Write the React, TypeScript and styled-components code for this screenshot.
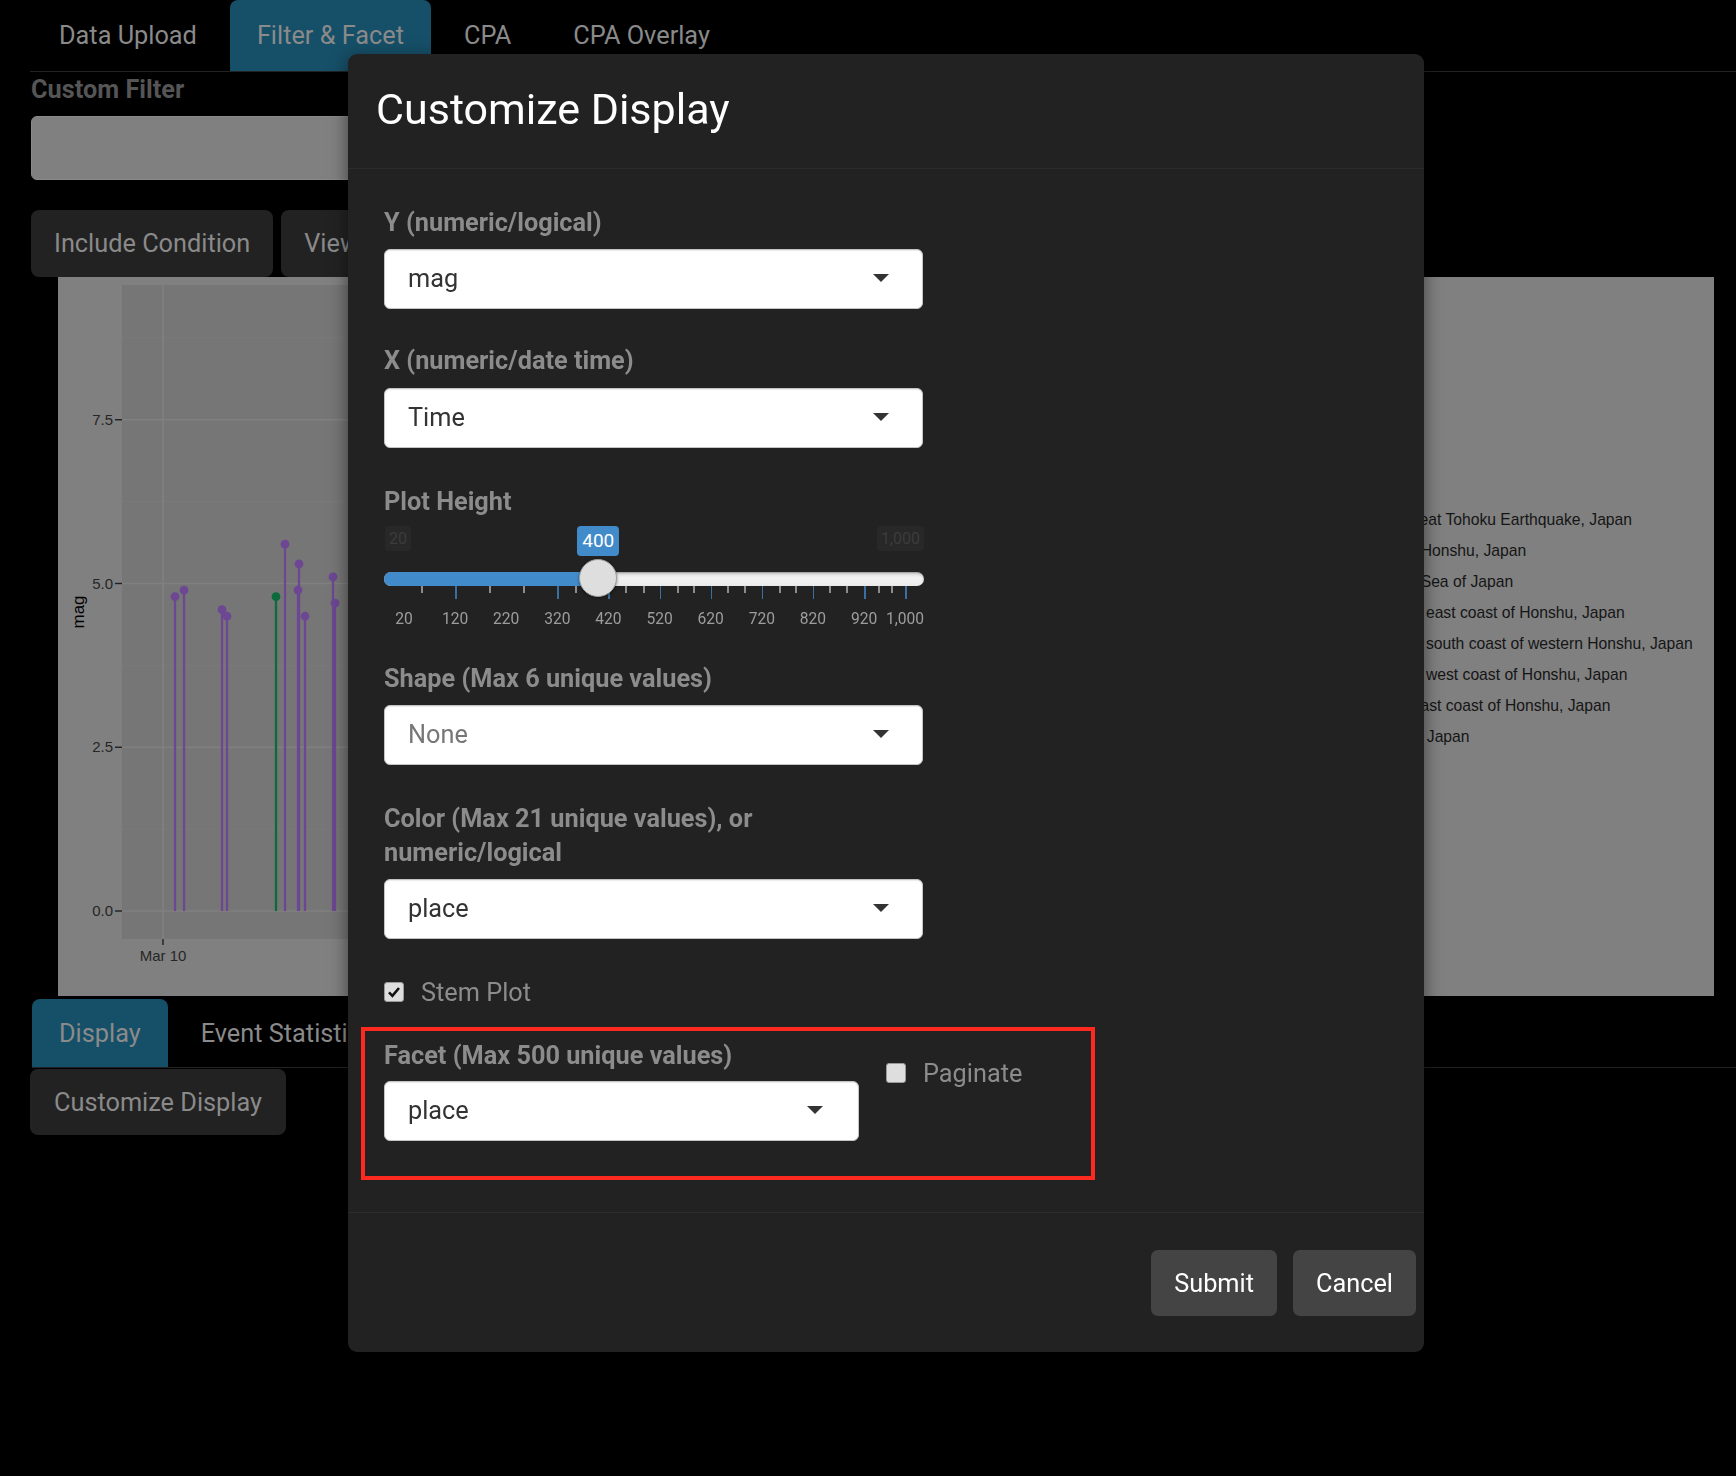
import React from 'react';
import styled, { createGlobalStyle } from 'styled-components';

const GlobalStyle = createGlobalStyle`
  * { box-sizing: border-box; }
  html, body {
    margin: 0;
    padding: 0;
    background: #000;
  }
  body {
    width: 1736px;
    height: 1476px;
    overflow: hidden;
    font-family: Roboto, "Noto Sans", Arial, sans-serif;
  }
`;

const BASE = 25.3;

/* ---------- page behind the dialog (already dimmed by the backdrop) ---------- */

const Page = styled.div`
  width: 1736px;
  height: 1476px;
  background: #000;
  color: #8a8a8a;
  font-size: ${BASE}px;
`;

const TabBar = styled.nav<{ $left: number; $height: number }>`
  display: flex;
  gap: 4px;
  margin-left: ${(p) => p.$left}px;
  height: ${(p) => p.$height + 1}px;
  border-bottom: 1px solid #222;
`;

const Tab = styled.div<{ $active?: boolean; $height: number; $pad: number }>`
  display: flex;
  align-items: center;
  height: ${(p) => p.$height}px;
  padding: 0 ${(p) => p.$pad}px;
  border-radius: 8px 8px 0 0;
  background: ${(p) => (p.$active ? '#164f68' : 'transparent')};
  color: #8a8a8a;
  white-space: nowrap;
`;

const Section = styled.div`
  padding-left: 31px;
`;

const FilterLabel = styled.div`
  margin-top: 1px;
  font-weight: 700;
  line-height: 34px;
  color: #555;
`;

const FilterInput = styled.div`
  margin-top: 9px;
  width: 880px;
  height: 64px;
  border-radius: 6px;
  border: 1px solid #8a8a8a;
  background: #808080;
`;

const ButtonRow = styled.div`
  display: flex;
  gap: 8px;
  margin-top: 30px;
`;

const DimButton = styled.div`
  display: flex;
  align-items: center;
  height: 67px;
  padding: 0 23px;
  border-radius: 8px;
  background: #222;
  color: #8a8a8a;
  white-space: nowrap;
`;

const PlotFrame = styled.div`
  margin-left: 58px;
  width: 1656px;
  height: 719px;
  background: #808080;
`;

const BottomTabs = styled.div`
  margin-top: 3px;
`;

const CustomizeButton = styled(DimButton)`
  display: inline-flex;
  margin: 1px 0 0 30px;
  height: 66px;
  padding: 0 24px;
`;

/* ---------- chart ---------- */

const y0 = 634;
const yPer = 65.5;
const yOf = (v: number) => y0 - v * yPer;

const stems: { x: number; v: number; green?: boolean }[] = [
  { x: 117, v: 4.8 },
  { x: 126, v: 4.9 },
  { x: 164, v: 4.6 },
  { x: 169, v: 4.5 },
  { x: 218, v: 4.8, green: true },
  { x: 227, v: 5.6 },
  { x: 241, v: 5.3 },
  { x: 240, v: 4.9 },
  { x: 247, v: 4.5 },
  { x: 275, v: 5.1 },
  { x: 277, v: 4.7 },
  { x: 330, v: 4.6 },
  { x: 402, v: 9.0 },
  { x: 420, v: 7.9 },
  { x: 455, v: 6.4 },
];

const legend = [
  '2011 Great Tohoku Earthquake, Japan',
  'eastern Honshu, Japan',
  'eastern Sea of Japan',
  'near the east coast of Honshu, Japan',
  'near the south coast of western Honshu, Japan',
  'near the west coast of Honshu, Japan',
  'off the east coast of Honshu, Japan',
  'Honshu, Japan',
];

const Chart: React.FC = () => (
  <svg width="1656" height="719" viewBox="0 0 1656 719" fontFamily="'Liberation Sans', Arial, sans-serif">
    <rect x="64" y="8" width="1140" height="654" fill="#767676" />
    {[1.25, 3.75, 6.25, 8.75].map((v) => (
      <line key={v} x1="64" x2="1204" y1={yOf(v)} y2={yOf(v)} stroke="#7b7b7b" strokeWidth="0.9" />
    ))}
    {[305, 705, 1105].map((x) => (
      <line key={x} x1={x} x2={x} y1="8" y2="662" stroke="#7b7b7b" strokeWidth="0.9" />
    ))}
    {[0, 2.5, 5, 7.5].map((v) => (
      <line key={v} x1="64" x2="1204" y1={yOf(v)} y2={yOf(v)} stroke="#808080" strokeWidth="1.7" />
    ))}
    {[105, 505, 905].map((x) => (
      <line key={x} x1={x} x2={x} y1="8" y2="662" stroke="#808080" strokeWidth="1.7" />
    ))}
    {stems.map((s, i) => (
      <g key={i} fill={s.green ? '#0b6b3b' : '#6d4793'} stroke={s.green ? '#0b6b3b' : '#6d4793'}>
        <line x1={s.x} x2={s.x} y1={yOf(0)} y2={yOf(s.v)} strokeWidth="2.3" />
        <circle cx={s.x} cy={yOf(s.v)} r="4.4" stroke="none" />
      </g>
    ))}
    {[0, 2.5, 5, 7.5].map((v) => (
      <g key={v}>
        <text x="55" y={yOf(v) + 5} textAnchor="end" fontSize="15" fill="#262626">
          {v.toFixed(1)}
        </text>
        <line x1="57" x2="64" y1={yOf(v)} y2={yOf(v)} stroke="#1f1f1f" strokeWidth="1.4" />
      </g>
    ))}
    <line x1="105" x2="105" y1="662" y2="668" stroke="#1f1f1f" strokeWidth="1.4" />
    <text x="105" y="684" textAnchor="middle" fontSize="15" fill="#262626">
      Mar 10
    </text>
    <text transform="translate(26 335) rotate(-90)" textAnchor="middle" fontSize="17" fill="#000">
      mag
    </text>
    <text x="1262" y="214" fontSize="17" fill="#151515">
      place
    </text>
    {legend.map((t, i) => (
      <g key={t}>
        <line x1="1268" x2="1292" y1={242 + i * 31.1} y2={242 + i * 31.1} stroke="#6d4793" strokeWidth="2.3" />
        <text x="1306" y={242 + i * 31.1 + 5.5} fontSize="15.7" fill="#151515">
          {t}
        </text>
      </g>
    ))}
  </svg>
);

/* ---------- dialog ---------- */

const ModalLayer = styled.div`
  position: fixed;
  inset: 0;
  overflow: hidden;
`;

const Dialog = styled.div`
  margin: 54px 0 0 348px;
  width: 1076px;
  border-radius: 9px;
  background: #222;
  box-shadow: 0 5px 18px rgba(0, 0, 0, 0.5);
  color: #8c8c8c;
  font-size: ${BASE}px;
`;

const Header = styled.div`
  display: flex;
  align-items: center;
  height: 115px;
  padding: 0 28px 3px;
  border-bottom: 1px solid #2c2c2c;
`;

const Title = styled.h4`
  margin: 0;
  font-size: 43px;
  font-weight: 400;
  line-height: 1.2;
  color: #fff;
`;

const Body = styled.div`
  padding: 37px 36px 71px;
`;

const Field = styled.div<{ $mb?: number; $width?: number }>`
  width: ${(p) => (p.$width ? `${p.$width}px` : 'auto')};
  margin-bottom: ${(p) => p.$mb ?? 0}px;
`;

const Label = styled.div<{ $mb?: number }>`
  margin-bottom: ${(p) => p.$mb ?? 9}px;
  font-weight: 700;
  line-height: 34px;
  color: #8c8c8c;
  white-space: nowrap;
`;

const Select = styled.div<{ $muted?: boolean; $right?: number; $inset?: number }>`
  display: flex;
  align-items: center;
  width: calc(100% - ${(p) => p.$inset ?? 0}px);
  height: 60px;
  padding: 0 ${(p) => p.$right ?? 33}px 2px 23px;
  border: 1px solid #c4c4c4;
  border-radius: 6px;
  background: #fff;
  box-shadow: inset 0 1px 1px rgba(0, 0, 0, 0.08);
  color: ${(p) => (p.$muted ? '#777' : '#333')};
`;

const Caret = styled.span`
  margin-left: auto;
  width: 0;
  height: 0;
  border-left: 8px solid transparent;
  border-right: 8px solid transparent;
  border-top: 8px solid #333;
`;

const CheckRow = styled.label`
  display: flex;
  align-items: center;
  gap: 17px;
  height: 34px;
  color: #8c8c8c;
`;

const Box = styled.span`
  display: inline-flex;
  align-items: center;
  justify-content: center;
  flex: none;
  width: 20px;
  height: 20px;
  border: 1px solid #9a9a9a;
  border-radius: 3px;
  background: #dedede;
`;

const FacetRow = styled.div`
  position: relative;
  display: grid;
  grid-template-columns: 502px 502px;
`;

const FacetCol = styled.div<{ $top?: number }>`
  padding-top: ${(p) => p.$top ?? 0}px;
`;

const Highlight = styled.div`
  position: absolute;
  left: -23px;
  top: -12px;
  width: 734px;
  height: 153px;
  border: 4px solid #ff2a1f;
  pointer-events: none;
`;

const Footer = styled.div`
  display: flex;
  justify-content: flex-end;
  gap: 16px;
  padding: 37px 8px 36px;
  border-top: 1px solid #2c2c2c;
`;

const FooterButton = styled.button`
  height: 66px;
  padding: 0 23px;
  border: none;
  border-radius: 7px;
  background: #444;
  color: #fff;
  font-family: inherit;
  font-size: ${BASE}px;
`;

/* ---------- slider ---------- */

const SliderWrap = styled.div`
  position: relative;
  width: 540px;
  height: 121px;
  margin-bottom: 22px;
`;

const Track = styled.div`
  position: absolute;
  left: 0;
  top: 53px;
  width: 540px;
  height: 14px;
  border-radius: 7px;
  background: linear-gradient(#d6d6d6, #f2f2f2 40%, #ececec);
  box-shadow: inset 0 1px 2px rgba(0, 0, 0, 0.3);
`;

const Fill = styled.div`
  position: absolute;
  left: 0;
  top: 53px;
  height: 14px;
  border-radius: 7px 0 0 7px;
  background: #428bca;
`;

const Handle = styled.div`
  position: absolute;
  top: 40px;
  width: 38px;
  height: 38px;
  margin-left: -19px;
  border-radius: 50%;
  border: 1px solid #9e9e9e;
  background: #dedede;
  box-shadow: 0 1px 3px rgba(0, 0, 0, 0.45);
`;

const EndLabel = styled.div`
  position: absolute;
  top: 7px;
  height: 25px;
  padding: 0 4px;
  border-radius: 4px;
  background: #282828;
  color: #3c3c3c;
  font-size: 16px;
  line-height: 25px;
`;

const Bubble = styled.div`
  position: absolute;
  top: 7px;
  height: 30px;
  padding: 0 5px;
  transform: translateX(-50%);
  border-radius: 4px;
  background: #428bca;
  color: #fff;
  font-size: 19px;
  line-height: 30px;
`;

const Tick = styled.div<{ $big?: boolean }>`
  position: absolute;
  top: 67px;
  width: 1.5px;
  height: ${(p) => (p.$big ? 13 : 7)}px;
  background: ${(p) => (p.$big ? '#3b6f9f' : '#8c8c8c')};
`;

const TickLabel = styled.div`
  position: absolute;
  top: 91px;
  transform: translateX(-50%);
  color: #9d9d9d;
  font-size: 15.6px;
  line-height: 18px;
  white-space: nowrap;
`;

const sMin = 20;
const sMax = 1000;
const pos = (v: number) => 20 + ((v - sMin) * 501) / (sMax - sMin);
const bigTicks = [120, 320, 420, 520, 620, 720, 820, 920, 1000];
const smallTicks = [37, 105, 139, 191, 207, 241, 259, 293, 309, 343, 360, 395, 411, 445, 462, 494, 507];
const tickLabels = [20, 120, 220, 320, 420, 520, 620, 720, 820, 920, 1000];

const PlotHeightSlider: React.FC<{ value: number }> = ({ value }) => (
  <SliderWrap>
    <EndLabel style={{ left: 1 }}>20</EndLabel>
    <EndLabel style={{ right: 0 }}>1,000</EndLabel>
    <Track />
    <Fill style={{ width: pos(value) }} />
    {smallTicks.map((x) => (
      <Tick key={`s${x}`} style={{ left: x }} />
    ))}
    {bigTicks.map((v) => (
      <Tick key={`b${v}`} $big style={{ left: pos(v) }} />
    ))}
    {tickLabels.map((v) => (
      <TickLabel key={v} style={{ left: pos(v) }}>
        {v.toLocaleString('en-US')}
      </TickLabel>
    ))}
    <Bubble style={{ left: pos(value) }}>{value}</Bubble>
    <Handle style={{ left: pos(value) }} />
  </SliderWrap>
);

const Check: React.FC<{ checked?: boolean }> = ({ checked }) => (
  <Box>
    {checked && (
      <svg width="14" height="14" viewBox="0 0 14 14">
        <path d="M2 7.4 L5.4 10.8 L12 3" fill="none" stroke="#111" strokeWidth="2.6" />
      </svg>
    )}
  </Box>
);

export default function App() {
  return (
    <>
      <GlobalStyle />
      <Page>
        <TabBar $left={30} $height={71}>
          <Tab $height={71} $pad={29}>Data Upload</Tab>
          <Tab $height={71} $pad={27} $active>
            Filter &amp; Facet
          </Tab>
          <Tab $height={71} $pad={29}>CPA</Tab>
          <Tab $height={71} $pad={29}>CPA Overlay</Tab>
        </TabBar>
        <Section>
          <FilterLabel>Custom Filter</FilterLabel>
          <FilterInput />
          <ButtonRow>
            <DimButton>Include Condition</DimButton>
            <DimButton>View</DimButton>
          </ButtonRow>
        </Section>
        <PlotFrame>
          <Chart />
        </PlotFrame>
        <BottomTabs>
          <TabBar $left={32} $height={68}>
            <Tab $height={68} $pad={27} $active>
              Display
            </Tab>
            <Tab $height={68} $pad={29}>Event Statistics</Tab>
          </TabBar>
          <CustomizeButton>Customize Display</CustomizeButton>
        </BottomTabs>
      </Page>

      <ModalLayer>
        <Dialog>
          <Header>
            <Title>Customize Display</Title>
          </Header>
          <Body>
            <Field $width={539} $mb={35}>
              <Label>Y (numeric/logical)</Label>
              <Select>
                mag
                <Caret />
              </Select>
            </Field>
            <Field $width={539} $mb={37}>
              <Label $mb={10}>X (numeric/date time)</Label>
              <Select>
                Time
                <Caret />
              </Select>
            </Field>
            <Field $width={540}>
              <Label $mb={0}>Plot Height</Label>
              <PlotHeightSlider value={400} />
            </Field>
            <Field $width={539} $mb={37}>
              <Label>Shape (Max 6 unique values)</Label>
              <Select $muted>
                None
                <Caret />
              </Select>
            </Field>
            <Field $width={539} $mb={36}>
              <Label>
                Color (Max 21 unique values), or
                <br />
                numeric/logical
              </Label>
              <Select>
                place
                <Caret />
              </Select>
            </Field>
            <Field $mb={30}>
              <CheckRow>
                <Check checked />
                Stem Plot
              </CheckRow>
            </Field>
            <FacetRow>
              <FacetCol>
                <Label $mb={8}>Facet (Max 500 unique values)</Label>
                <Select $inset={27} $right={35}>
                  place
                  <Caret />
                </Select>
              </FacetCol>
              <FacetCol $top={17}>
                <CheckRow>
                  <Check />
                  Paginate
                </CheckRow>
              </FacetCol>
              <Highlight />
            </FacetRow>
          </Body>
          <Footer>
            <FooterButton>Submit</FooterButton>
            <FooterButton>Cancel</FooterButton>
          </Footer>
        </Dialog>
      </ModalLayer>
    </>
  );
}
